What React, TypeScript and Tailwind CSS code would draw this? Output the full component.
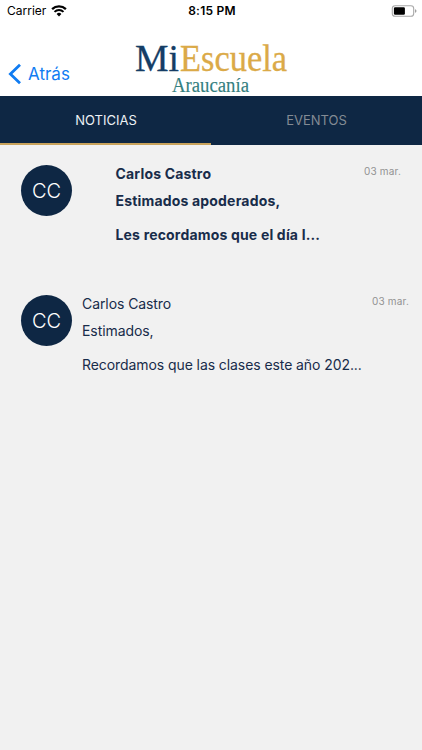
import React from "react";

type Noticia = {
    id: number;
    initials: string;
    author: string;
    greeting: string;
    preview: string;
    date: string;
    unread: boolean;
};

const noticias: Noticia[] = [
    {
        id: 1,
        initials: "CC",
        author: "Carlos Castro",
        greeting: "Estimados apoderados,",
        preview: "Les recordamos que el día l...",
        date: "03 mar.",
        unread: true,
    },
    {
        id: 2,
        initials: "CC",
        author: "Carlos Castro",
        greeting: "Estimados,",
        preview: "Recordamos que las clases este año 202...",
        date: "03 mar.",
        unread: false,
    },
];

const StatusBar = () => {
    return (
        <div className="grid grid-cols-3 items-center h-[22px] pl-[7px] pr-[5px] text-[12px] leading-[22px] text-black">
            <div className="flex items-center gap-[5px]">
                <span>Carrier</span>
                <svg width="16" height="12" viewBox="0 0 16 12" fill="none" className="-mt-px">
                    <path d="M1.1 4.2a10 10 0 0 1 13.8 0" stroke="black" strokeWidth="2.3" />
                    <path d="M3.5 6.9a6.5 6.5 0 0 1 9 0" stroke="black" strokeWidth="2" />
                    <path d="M8 11.5 5.6 9a3.4 3.4 0 0 1 4.8 0Z" fill="black" />
                </svg>
            </div>
            <span className="text-center font-semibold tracking-[0.25px]">8:15 PM</span>
            <svg className="justify-self-end -mt-px" width="26" height="12" viewBox="0 0 26 12" fill="none">
                <rect x="1.3" y="0.8" width="21.4" height="10.4" rx="2.8" stroke="#a8a8a8" strokeWidth="1.1" />
                <rect x="2.9" y="2.3" width="11" height="7.4" rx="1.2" fill="black" />
                <path d="M24.2 4.3v3.4c.8-.3 1.2-1 1.2-1.7s-.4-1.4-1.2-1.7Z" fill="#8c8c8c" />
            </svg>
        </div>
    );
};

const Logo = () => {
    return (
        <div className="flex flex-col w-[156px] font-['Liberation_Serif',serif]">
            <svg width="156" height="38" viewBox="0 0 156 38" className="overflow-visible">
                <text x="2" y="35" fontSize="37" textLength="44" lengthAdjust="spacingAndGlyphs" fill="#153d66" stroke="#153d66" strokeWidth="0.3">
                    Mi
                </text>
                <text x="47" y="35" fontSize="37" textLength="107" lengthAdjust="spacingAndGlyphs" fill="#dbaa48" stroke="#dbaa48" strokeWidth="0.3">
                    Escuela
                </text>
            </svg>
            <svg width="156" height="22" viewBox="0 0 156 22" className="overflow-visible">
                <text x="39" y="18" fontSize="20" textLength="77" lengthAdjust="spacingAndGlyphs" fill="#34807f" stroke="#34807f" strokeWidth="0.15">
                    Araucanía
                </text>
            </svg>
        </div>
    );
};

const Header = () => {
    return (
        <div className="grid grid-cols-[133px_1fr] h-[74px] pt-[14px]">
            <button className="flex items-center gap-[7px] h-[48px] pl-[8px] pt-[28px] pb-[3px] mt-[1px] text-[#107cf2]">
                <svg width="13" height="22" viewBox="0 0 13 22" fill="none">
                    <path d="M12 1.7 2.4 11 12 20.3" stroke="currentColor" strokeWidth="2.8" />
                </svg>
                <span className="text-[17px] leading-[22px]">Atrás</span>
            </button>
            <Logo />
        </div>
    );
};

const Tabs = () => {
    return (
        <div className="grid grid-cols-2 h-[49px] bg-[#0e2744] text-[13px]">
            <button className="border-b-2 border-[#c9a35b] pt-[2px] pl-[1px] text-[#edf1f5]">NOTICIAS</button>
            <button className="border-b-2 border-transparent pt-[2px] text-[#838b94]">EVENTOS</button>
        </div>
    );
};

const NoticiaItem = ({ noticia }: { noticia: Noticia }) => {
    const { initials, author, greeting, preview, date, unread } = noticia;

    return (
        <div className={unread ? "flex h-[130px] pt-[20px] pl-[21px] pr-[21px]" : "flex h-[130px] pt-[20px] pl-[21px] pr-[13px]"}>
            <div className="flex shrink-0 items-center justify-center size-[51px] rounded-full bg-[#0e2744] text-white text-[20px] font-light">
                {initials}
            </div>
            <div className={unread ? "ml-[43.5px] flex-1 font-bold tracking-[0.18px]" : "ml-[10px] flex-1 tracking-[-0.08px]"}>
                <div className="flex justify-between">
                    <p className="text-[14px] leading-[18px]">{author}</p>
                    <span className="text-[10px] leading-[13px] font-normal text-[#929292] tracking-[0.2px]">{date}</span>
                </div>
                <p className="mt-[9px] text-[14px] leading-[17px]">{greeting}</p>
                <p className="mt-[17px] text-[14px] leading-[17px] whitespace-nowrap">{preview}</p>
            </div>
        </div>
    );
};

const App = () => {
    return (
        <div className="flex flex-col w-[422px] h-[750px] overflow-hidden bg-white font-['Inter',sans-serif] text-[#182c4a]">
            <StatusBar />
            <Header />
            <Tabs />
            <div className="flex-1 bg-[#f1f1f1]">
                {noticias.map((noticia) => (
                    <NoticiaItem key={noticia.id} noticia={noticia} />
                ))}
            </div>
        </div>
    );
};

export default App;
